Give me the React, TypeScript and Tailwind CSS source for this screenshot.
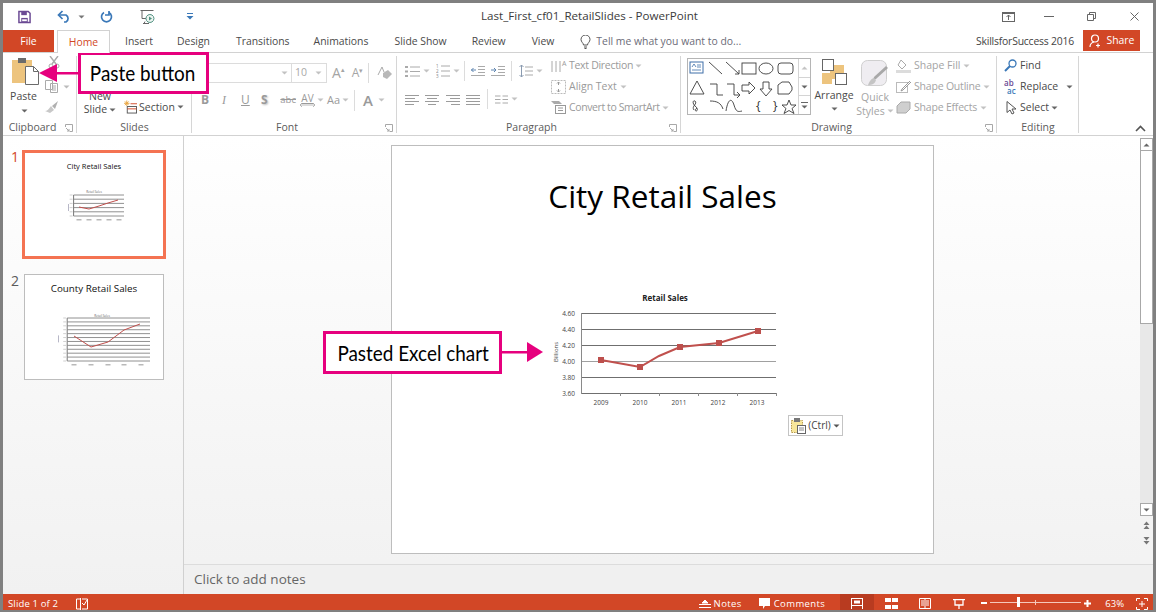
import React from "react";

const FONT = { fontFamily: '"Open Sans", "Noto Sans", sans-serif' };

function Caret({ color = "#8a8a8a", className = "" }: { color?: string; className?: string }) {
  return (
    <svg width="7" height="4" viewBox="0 0 7 4" className={className}>
      <path d="M0.5 0.5h6L3.5 3.5z" fill={color} />
    </svg>
  );
}

function Launcher() {
  return (
    <svg width="8" height="8" viewBox="0 0 8 8" className="absolute right-[4px] bottom-[3px]">
      <path d="M0.5 3V0.5H7.5V7.5H4.5" fill="none" stroke="#a8a8a8" />
      <path d="M1 4l3 3M4 5v2H2" fill="none" stroke="#a8a8a8" />
    </svg>
  );
}

function Group({ w, label, launcher, children }: { w: number; label: string; launcher?: boolean; children?: React.ReactNode }) {
  return (
    <div style={{ width: w }} className="relative h-full shrink-0 flex flex-col">
      <div className="flex-1 min-h-0 flex">{children}</div>
      <div className={`h-[15px] text-center text-[10.5px] leading-[15px] text-[#5c5c5c] ${launcher ? "pr-[15px]" : ""}`}>{label}</div>
      {launcher && <Launcher />}
      <div className="absolute right-0 top-[3px] bottom-[2px] w-px bg-[#d6d6d6]" />
    </div>
  );
}

function VSep({ h = 20, className = "" }: { h?: number; className?: string }) {
  return <div style={{ height: h }} className={`w-px bg-[#dcdcdc] shrink-0 ${className}`} />;
}

function Lines({ kind }: { kind: "left" | "center" | "right" | "justify" }) {
  const rows: [number, number][] =
    kind === "left" ? [[0, 14], [0, 10], [0, 14], [0, 9]] :
    kind === "center" ? [[0, 14], [2, 10], [0, 14], [3, 8]] :
    kind === "right" ? [[0, 14], [4, 10], [0, 14], [5, 9]] :
    [[0, 14], [0, 14], [0, 14], [0, 14]];
  return (
    <svg width="14" height="11" viewBox="0 0 14 11">
      {rows.map(([x, w], i) => (
        <rect key={i} x={x} y={1 + i * 3} width={w} height="1" fill="#9c9c9c" />
      ))}
    </svg>
  );
}

function Gallery() {
  const s = { fill: "none", stroke: "#3c3c3c", strokeWidth: 0.9 };
  return (
    <div className="w-[124px] h-[57px] border border-[#b5b5b5] flex">
      <svg width="110" height="55" viewBox="0 0 110 55" className="shrink-0">
        <rect x="2" y="3" width="13" height="11" fill="#fff" stroke="#3e6ea8" />
        <path d="M4 8l2-3 2 3M9 6h4M9 8h4M4 11h9" stroke="#3e6ea8" fill="none" strokeWidth="0.8" />
        <path d="M21 3l13 12" {...s} />
        <path d="M38 3l13 12M51 11v4h-4" {...s} />
        <rect x="54" y="4" width="14" height="11" {...s} />
        <ellipse cx="78" cy="9.5" rx="7" ry="5.5" {...s} />
        <rect x="90" y="4" width="15" height="11" rx="3" {...s} />
        <path d="M9 22l7 13H2z" {...s} />
        <path d="M22 25h7v11h6" {...s} />
        <path d="M39 25h7v11h5M49 33l3 3-3 3" {...s} />
        <path d="M54 26h7v-3l6 6-6 6v-3h-7z" {...s} />
        <path d="M75 23h6v7h3l-6 7-6-7h3z" {...s} />
        <path d="M90 35V26l4-3h7l3 5v3l-3 4z" {...s} />
        <path d="M6 51c-3-4 4-6 1-9-2-1-3 2 0 5 3 2 3 5 1 5-1 0-1-2 1-3" {...s} />
        <path d="M22 42c7 0 11 2 13 8" {...s} />
        <path d="M38 52c2-13 6-13 8-6s4 7 8 6" {...s} />
        <text x="68" y="51" fontSize="12" fill="#333" style={FONT}>{"{"}</text>
        <text x="85" y="51" fontSize="12" fill="#333" style={FONT}>{"}"}</text>
        <path d="M101 41l2 5h5l-4 3.500 2 5-5-3-5 3 2-5-4-3.500h5z" {...s} />
      </svg>
      <div className="flex-1 border-l border-[#d4d4d4] flex flex-col">
        <div className="h-[19px] flex items-center justify-center border-b border-[#d4d4d4]">
          <svg width="7" height="4" viewBox="0 0 7 4"><path d="M0.500 3.500h6L3.500 0.500z" fill="#c4c4c4" /></svg>
        </div>
        <div className="h-[18px] flex items-center justify-center border-b border-[#d4d4d4]">
          <Caret color="#666" />
        </div>
        <div className="flex-1 flex flex-col items-center justify-center gap-[2px]">
          <div className="w-[7px] h-px bg-[#666]" />
          <Caret color="#666" />
        </div>
      </div>
    </div>
  );
}

function MiniChart({ w, h, pts, lines, xs }: { w: number; h: number; pts: string; lines: number; xs: number[] }) {
  const gap = (h - 8) / (lines - 1);
  const ax = w * 0.1;
  return (
    <svg width={w} height={h} viewBox={`0 0 ${w} ${h}`} className="block">
      <path d={`M${ax} 2V${h - 6}`} stroke="#777" strokeWidth="1" fill="none" />
      {Array.from({ length: lines }).map((_, i) => (
        <g key={i}>
          <line x1={ax} x2={w} y1={2 + i * gap} y2={2 + i * gap} stroke="#858585" strokeWidth="0.9" />
          <rect x={ax - 4} y={1.5 + i * gap} width="3" height="1" fill="#d0d0d0" />
        </g>
      ))}
      <polyline points={pts} fill="none" stroke="#c0504d" strokeWidth="1" />
      {xs.map((x, i) => (
        <rect key={i} x={x - 2.5} y={h - 3} width="5" height="1.500" fill="#b9b9b9" />
      ))}
      <rect x="0" y={h * 0.38} width="1" height="7" fill="#b7b7c7" />
    </svg>
  );
}

export default function App() {
  return (
    <div className="relative w-[1156px] h-[612px] overflow-hidden bg-[#f3f3f3] border-t-[3px] border-x-[3px] border-b-[2px] border-[#808080] flex flex-col text-[#444]" style={FONT}>
      {/* Title bar */}
      <div className="h-[27px] shrink-0 bg-white grid grid-cols-[478px_auto_1fr] items-center">
        <div className="flex items-center">
          <svg width="13" height="14" viewBox="0 0 14 14" className="ml-[15px]">
            <path d="M1 1h10l2 2v10H1z" fill="none" stroke="#6b4a94" strokeWidth="1.600" />
            <rect x="3.500" y="1" width="6" height="4" fill="#6b4a94" />
            <rect x="3.500" y="8" width="7" height="5" fill="#6b4a94" />
            <rect x="4.500" y="9.500" width="5" height="2" fill="#fff" />
          </svg>
          <svg width="14" height="13" viewBox="0 0 14 13" className="ml-[26px]">
            <path d="M2 5h7a4 4 0 0 1 0 7H7" fill="none" stroke="#3a78b8" strokeWidth="1.700" />
            <path d="M5.500 1L1.500 5l4 4" fill="none" stroke="#3a78b8" strokeWidth="1.700" />
          </svg>
          <Caret color="#777" className="ml-[7px]" />
          <svg width="13" height="14" viewBox="0 0 13 14" className="ml-[15px]">
            <path d="M4 2.500a5 5 0 1 0 5 0" fill="none" stroke="#3a78b8" strokeWidth="1.700" />
            <path d="M9 1v4H5" fill="none" stroke="#3a78b8" strokeWidth="1.700" />
          </svg>
          <svg width="16" height="16" viewBox="0 0 16 16" className="ml-[27px]">
            <path d="M0.500 1.500h13M2 1.500v8h4M5 12.500l-1 2M3 14.500h6" fill="none" stroke="#666" />
            <path d="M10 5a4 4 0 1 1-.1 0z" fill="#eef5f1" stroke="#4f9080" transform="translate(0 .5)" />
            <path d="M9 7.500l3 2-3 2z" fill="#4f9080" />
          </svg>
          <svg width="8" height="7" viewBox="0 0 8 7" className="ml-[30px]">
            <rect x="1" y="0" width="6" height="1" fill="#3a78b8" />
            <path d="M0.500 3h7L4 6.500z" fill="#3a78b8" />
          </svg>
        </div>
        <div className="text-[11.6px] leading-[14px] -mt-[2px] text-[#3b3b3b]">Last_First_cf01_RetailSlides - PowerPoint</div>
        <div className="flex items-center justify-end pr-[14px]">
          <svg width="13" height="10" viewBox="0 0 13 10" className="mr-[29px]">
            <rect x="0.500" y="0.500" width="12" height="9" fill="none" stroke="#666" />
            <path d="M6.500 8V3M4.500 5l2-2 2 2M0.500 1.500h12" fill="none" stroke="#666" />
          </svg>
          <div className="w-[10px] h-px bg-[#666] mr-[33px]" />
          <svg width="9" height="9" viewBox="0 0 9 9" className="mr-[34px]">
            <path d="M2.500 2V0.500h6v6H7M0.500 2.500h6v6h-6z" fill="none" stroke="#666" />
          </svg>
          <svg width="9" height="9" viewBox="0 0 9 9">
            <path d="M0.500 0.500l8 8M8.500 0.500l-8 8" stroke="#666" fill="none" />
          </svg>
        </div>
      </div>

      {/* Tabs */}
      <div className="h-[22px] shrink-0 bg-white flex items-stretch text-[10.4px] text-[#4a4a4a] relative">
        <div className="w-[51px] bg-[#d24726] text-white flex items-center justify-center pt-[1px]">File</div>
        <div className="ml-[3px] w-[53px] -mb-px z-10 bg-white border-t border-x border-[#d2d2d2] text-[#d24726] flex items-center justify-center pt-[2px]">Home</div>
        <div className="flex items-center pl-[15px] pt-[2px]">
          <span>Insert</span>
          <span className="ml-[24px]">Design</span>
          <span className="ml-[26px]">Transitions</span>
          <span className="ml-[24px]">Animations</span>
          <span className="ml-[26px]">Slide Show</span>
          <span className="ml-[25px]">Review</span>
          <span className="ml-[26px]">View</span>
          <svg width="11" height="14" viewBox="0 0 11 14" className="ml-[26px] -mt-[1px]">
            <path d="M3.500 10c0-2-2.500-3-2.500-5.500a4.500 4.500 0 0 1 9 0C10 7 7.500 8 7.500 10zM4 12h3M4.500 13.500h2" fill="none" stroke="#555" />
          </svg>
          <span className="ml-[5px] text-[#6c6c78]">Tell me what you want to do...</span>
        </div>
        <div className="ml-auto flex items-center">
          <span className="mr-[9px] pt-[2px] text-[#444] tracking-[-0.2px]">SkillsforSuccess 2016</span>
          <div className="w-[57px] mr-[13px] h-[21px] self-start bg-[#d24726] text-white flex items-center justify-center gap-[4px]">
            <svg width="14" height="14" viewBox="0 0 14 14">
              <circle cx="6" cy="4.500" r="3.500" fill="none" stroke="#fff" strokeWidth="1.200" />
              <path d="M1 13c0-3 2-4.500 4-5M9 9.500v4M7 11.500h4" fill="none" stroke="#fff" strokeWidth="1.200" />
            </svg>
            <span>Share</span>
          </div>
        </div>
      </div>

      {/* Ribbon */}
      <div className="h-[84px] shrink-0 bg-white border-y border-[#d2d2d2] flex text-[#9a9a9a] text-[10.5px] relative">
        <Group w={74} label="Clipboard" launcher>
          <div className="w-[42px] flex flex-col items-center pt-[4px] text-[#4a4a4a]">
            <svg width="28" height="28" viewBox="0 0 28 28" className="ml-[3px]">
              <rect x="0" y="3" width="20" height="23" fill="#edc47e" />
              <rect x="6" y="1" width="8" height="5" fill="#6b6b6b" />
              <path d="M13.500 9.500h8l5 5v13h-13z" fill="#fff" stroke="#6b6b6b" />
              <path d="M21.500 9.500v5h5" fill="none" stroke="#6b6b6b" />
            </svg>
            <span className="mt-[4px] leading-[14px] -ml-[1px]">Paste</span>
            <Caret color="#666" className="mt-[6px]" />
          </div>
          <div className="flex flex-col items-start pt-[3px]">
            <svg width="12" height="14" viewBox="0 0 12 14" className="ml-[3px]"><path d="M2 0l6 8M10 0L4 8" stroke="#aaa" strokeWidth="1.400" /><circle cx="3" cy="10" r="2" fill="none" stroke="#aaa" /><circle cx="9" cy="10" r="2" fill="none" stroke="#aaa" /></svg>
            <div className="flex items-center gap-[5px] mt-[10px]">
              <svg width="13" height="13" viewBox="0 0 13 13"><path d="M0.500 0.500h7v9h-7zM5.500 3.500h7v9h-7z" fill="#fff" stroke="#aaa" /><path d="M7 6h4M7 8h4M7 10h4" stroke="#aaa" /></svg>
              <Caret color="#bbb" />
            </div>
            <svg width="13" height="12" viewBox="0 0 13 12" className="mt-[8px]"><path d="M13 0L7 5 10 8z" fill="#b0b0b0" /><path d="M6 5l3 4-4 3-5-2c2 0 4-2 6-5z" fill="#c8c8c8" /></svg>
          </div>
        </Group>

        <Group w={115} label="Slides">
          <div className="w-[44px] ml-[1px] flex flex-col items-center pt-[37px] text-[#4a4a4a] leading-[13px]">
            <span>New</span>
            <span className="flex items-center gap-[2px]">Slide<Caret color="#666" /></span>
          </div>
          <div className="flex items-start pt-[47px] ml-[2px] text-[#4a4a4a] leading-[14px]">
            <svg width="13" height="14" viewBox="0 0 14 14">
              <path d="M3 0v6M0 3h6M1 1l4 4M5 1L1 5" stroke="#e8a33d" />
              <path d="M7 3.500h7" stroke="#d24726" />
              <rect x="3.500" y="6.500" width="10" height="7" fill="none" stroke="#555" />
              <path d="M3.500 9h10" stroke="#d24726" />
            </svg>
            <span className="ml-[2px] flex items-center gap-[2px]">Section<Caret color="#666" /></span>
          </div>
        </Group>

        <Group w={205} label="Font" launcher>
          <div className="flex-1 flex flex-col pt-[10px] pl-[8px]">
            <div className="flex items-center h-[20px]">
              <div className="w-[127px] h-[20px] border border-[#dcdcdc] flex items-center text-[#aaa]">
                <div className="w-[91px] flex justify-end pr-[3px] h-full items-center border-r border-[#dcdcdc]"><Caret color="#c2c2c2" /></div>
                <span className="ml-[3px] text-[#a8a8a8]">10</span>
                <Caret color="#c2c2c2" className="ml-auto mr-[4px]" />
              </div>
              <div className="ml-[5px] flex items-start text-[14px] leading-none text-[#a5a5a5]"><span>A</span><span className="text-[7px]">▴</span></div>
              <div className="ml-[7px] flex items-start text-[12px] leading-none text-[#a5a5a5]"><span>A</span><span className="text-[7px]">▾</span></div>
              <VSep className="ml-[5px]" />
              <svg width="15" height="15" viewBox="0 0 15 15" className="ml-[8px]"><path d="M1 9l4-8 2 5" fill="none" stroke="#aaa" /><path d="M6 7l5-3 4 4-5 5-4-2z" fill="#b8b8b8" /></svg>
            </div>
            <div className="flex items-center h-[20px] mt-[7px] text-[12px] text-[#9a9a9a]">
              <span className="font-bold ml-[1px] w-[20px] leading-none">B</span>
              <span className="italic w-[20px] pl-[1px]" style={{ fontFamily: '"Liberation Serif", serif' }}>I</span>
              <span className="underline w-[20px]">U</span>
              <span className="font-bold w-[14px]" style={{ textShadow: "1px 1px 2px #bbb" }}>S</span>
              <span className="text-[9.5px] line-through w-[21px] text-right">abc</span>
              <div className="ml-[3px] w-[17px] flex flex-col items-center leading-none">
                <span className="text-[10px] leading-[10px] underline">AV</span>
                <svg width="15" height="4" viewBox="0 0 15 4"><path d="M0 2h15M2 0L0 2l2 2M13 0l2 2-2 2" fill="none" stroke="#a8a8a8" strokeWidth=".8" /></svg>
              </div>
              <Caret color="#c2c2c2" className="ml-[1px]" />
              <span className="ml-[3px] text-[11px]">Aa</span>
              <Caret color="#c2c2c2" className="ml-[2px]" />
              <VSep h={21} className="ml-[5px]" />
              <span className="ml-[8px] text-[15px] font-semibold leading-none">A</span>
              <Caret color="#c2c2c2" className="ml-[5px]" />
            </div>
          </div>
        </Group>

        <Group w={284} label="Paragraph" launcher>
          <div className="w-[154px] shrink-0 flex flex-col pt-[8px] pl-[8px]">
            <div className="flex items-center h-[20px]">
              <svg width="15" height="13" viewBox="0 0 15 13"><path d="M5 2h10M5 6.500h10M5 11h10" stroke="#aaa" /><path d="M0 1h3v2H0zM0 5.500h3v2H0zM0 10h3v2H0z" fill="#aaa" /></svg>
              <Caret color="#c2c2c2" className="ml-[3px]" />
              <svg width="14" height="14" viewBox="0 0 14 14" className="ml-[6px]"><path d="M5 2h9M5 7h9M5 12h9" stroke="#aaa" /><text x="0" y="4" fontSize="4.500" fill="#888">1</text><text x="0" y="9" fontSize="4.500" fill="#888">2</text><text x="0" y="14" fontSize="4.500" fill="#888">3</text></svg>
              <Caret color="#c2c2c2" className="ml-[3px]" />
              <VSep className="ml-[4px]" />
              <svg width="14" height="11" viewBox="0 0 14 11" className="ml-[6px]"><path d="M7 .5h7M7 3.500h7M7 6.500h7M0 9.500h14" stroke="#aaa" /><path d="M0 4h5M2.500 2L.5 4l2 2" fill="none" stroke="#5d84b0" /></svg>
              <svg width="14" height="11" viewBox="0 0 14 11" className="ml-[6px]"><path d="M7 .5h7M7 3.500h7M7 6.500h7M0 9.500h14" stroke="#aaa" /><path d="M0 4h5M3 2l2 2-2 2" fill="none" stroke="#5d84b0" /></svg>
              <VSep className="ml-[6px]" />
              <svg width="14" height="14" viewBox="0 0 14 14" className="ml-[7px]"><path d="M6 3h8M6 7h8M6 11h8" stroke="#aaa" /><path d="M2.500 1v12M.5 3l2-2 2 2M.5 11l2 2 2-2" fill="none" stroke="#8a9bb0" /></svg>
              <Caret color="#c2c2c2" className="ml-[3px]" />
            </div>
            <div className="flex items-center h-[20px] mt-[8px]">
              <Lines kind="left" />
              <span className="w-[6px]" />
              <Lines kind="center" />
              <span className="w-[7px]" />
              <Lines kind="right" />
              <span className="w-[6px]" />
              <Lines kind="justify" />
              <VSep className="ml-[7px]" />
              <svg width="13" height="9" viewBox="0 0 13 9" className="ml-[7px]"><path d="M0 1h5.500M0 4.500h5.500M0 8h5.500M7.500 1H13M7.500 4.500H13M7.500 8H13" stroke="#aaa" /></svg>
              <Caret color="#c2c2c2" className="ml-[3px]" />
            </div>
          </div>
          <div className="flex flex-col leading-[21px] text-[10.5px] pt-[2px] text-[#9a9a9a] whitespace-nowrap">
            <div className="flex items-center h-[21px] gap-[2px]">
              <svg width="16" height="14" viewBox="0 0 16 14"><path d="M1 2v11M5 2v11M9 2v11" stroke="#aaa" /><text x="11" y="7" fontSize="7" fill="#999">A</text></svg>
              <span className="tracking-[-0.3px]">Text Direction</span><Caret color="#c2c2c2" />
            </div>
            <div className="flex items-center h-[21px] gap-[3px]">
              <svg width="15" height="14" viewBox="0 0 15 14"><rect x=".5" y=".5" width="14" height="13" fill="none" stroke="#bbb" strokeDasharray="2 1" /><path d="M7.500 2v3M6 3.500l1.500-1.500 1.500 1.500M7.500 12V9M6 10.500l1.500 1.500 1.500-1.500" fill="none" stroke="#999" /></svg>
              <span>Align Text</span><Caret color="#c2c2c2" />
            </div>
            <div className="flex items-center h-[21px] gap-[3px]">
              <svg width="15" height="13" viewBox="0 0 15 13"><path d="M0 0h8l3 3H3z" fill="#aaa" /><rect x="4.500" y="4.500" width="10" height="8" fill="#fff" stroke="#999" /><path d="M7 7h5M7 9.500h5" stroke="#999" /></svg>
              <span className="tracking-[-0.4px]">Convert to SmartArt</span><Caret color="#c2c2c2" />
            </div>
          </div>
        </Group>

        <Group w={316} label="Drawing" launcher>
          <div className="pt-[5px] pl-[6px]"><Gallery /></div>
          <div className="w-[46px] shrink-0 flex flex-col items-center pt-[6px] text-[#4a4a4a]">
            <svg width="25" height="26" viewBox="0 0 25 26">
              <rect x="8" y="6" width="14" height="14" fill="#edc47e" />
              <rect x="0" y="14" width="10" height="11" fill="#edc47e" />
              <rect x=".5" y=".5" width="11" height="11" fill="#fff" stroke="#666" />
              <rect x="13.500" y="14.500" width="11" height="11" fill="#fff" stroke="#666" />
            </svg>
            <span className="mt-[3px] leading-[14px]">Arrange</span>
            <Caret color="#666" className="mt-[5px]" />
          </div>
          <div className="w-[36px] shrink-0 flex flex-col items-center pt-[7px] text-[#a4a4a4]">
            <svg width="28" height="27" viewBox="0 0 28 27" className="shrink-0">
              <rect x=".5" y=".5" width="25" height="25" rx="6" fill="#efedf1" stroke="#cfcfcf" />
              <path d="M27 8L15 19l-3 1 1-3L25 6z" fill="#a8a8a8" />
              <path d="M13 18c-4 1-5 5-6 7 4 0 7-1 8-5z" fill="#c4c4c4" />
            </svg>
            <span className="mt-[3px] leading-[14px]">Quick</span>
            <span className="flex items-center gap-[2px] leading-[14px]">Styles<Caret color="#c2c2c2" /></span>
          </div>
          <div className="flex flex-col pt-[2px] ml-[3px] text-[#a4a4a4] whitespace-nowrap">
            <div className="flex items-center h-[21px] gap-[3px]">
              <svg width="15" height="14" viewBox="0 0 15 14"><path d="M5 1l5 5-4 4-4-4z" fill="none" stroke="#aaa" /><rect x="0" y="11" width="15" height="3" fill="#dcdcdc" /></svg>
              <span>Shape Fill</span><Caret color="#c2c2c2" />
            </div>
            <div className="flex items-center h-[21px] gap-[3px]">
              <svg width="15" height="14" viewBox="0 0 15 14"><rect x=".5" y="2.500" width="11" height="10" fill="none" stroke="#bbb" /><path d="M14 1L6 9l-1 2 2-1 8-8" fill="#fff" stroke="#999" /></svg>
              <span className="tracking-[-0.2px]">Shape Outline</span><Caret color="#c2c2c2" />
            </div>
            <div className="flex items-center h-[21px] gap-[3px]">
              <svg width="15" height="13" viewBox="0 0 15 13"><path d="M1 5l4-4h9v7l-4 4H1z" fill="#cfcfcf" stroke="#aaa" /></svg>
              <span className="tracking-[-0.2px]">Shape Effects</span><Caret color="#c2c2c2" />
            </div>
          </div>
        </Group>

        <Group w={82} label="Editing">
          <div className="flex flex-col pt-[2px] pl-[7px] text-[#4a4a4a] whitespace-nowrap">
            <div className="flex items-center h-[21px]">
              <svg width="13" height="13" viewBox="0 0 13 13"><circle cx="8.500" cy="4.500" r="3.500" fill="none" stroke="#3a78b8" strokeWidth="1.300" /><path d="M6 7l-5 5" stroke="#3a78b8" strokeWidth="2" /></svg>
              <span className="ml-[3px]">Find</span>
            </div>
            <div className="flex items-center h-[21px]">
              <div className="w-[15px] h-[16px] flex flex-col text-[8px] font-semibold">
                <span className="block h-[8px] leading-[8px] text-[#6b4a94]">ab</span>
                <span className="block h-[8px] leading-[8px] text-[#3a78b8] pl-[3px]">ac</span>
              </div>
              <span className="ml-[1px]">Replace</span>
              <Caret color="#666" className="ml-[8px]" />
            </div>
            <div className="flex items-center h-[21px]">
              <svg width="12" height="14" viewBox="0 0 12 14" className="ml-[2px]"><path d="M1 .5v11l3-2.500 2 4 2-1-2-4h4z" fill="#fff" stroke="#555" /></svg>
              <span className="ml-[2px] flex items-center gap-[2px]">Select<Caret color="#666" /></span>
            </div>
          </div>
        </Group>
        <svg width="11" height="7" viewBox="0 0 11 7" className="absolute right-[7px] bottom-[3px]"><path d="M1 6l4.500-4.500L10 6" fill="none" stroke="#555" strokeWidth="1.600" /></svg>
      </div>

      {/* Main */}
      <div className="flex-1 min-h-0 flex bg-gradient-to-b from-white to-[#f1f1f1]">
        <div className="w-[181px] shrink-0 border-r border-[#d0d0d0] pt-[14px] pl-[8px] text-[#5a5a5a]">
          <div className="flex items-start">
            <span className="w-[10px] text-[14px] leading-[13px] text-[#d24726]">1</span>
            <div className="w-[144px] h-[109px] ml-[1px] border-[3px] border-[#f47352] bg-white flex flex-col items-center">
              <div className="mt-[8px] text-[7.5px] font-medium leading-[10px] text-[#111]">City Retail Sales</div>
              <div className="mt-[19px] text-[3px] leading-[4px] text-[#666]">Retail Sales</div>
              <div className="ml-[3px] -mt-[1px]"><MiniChart w={56} h={29} lines={6} xs={[11, 21, 31, 41, 51]} pts="11,14 21,16 31,13 40,10 50,7" /></div>
            </div>
          </div>
          <div className="flex items-start mt-[15px]">
            <span className="w-[10px] text-[14px] leading-[13px]">2</span>
            <div className="w-[140px] h-[106px] ml-[3px] border border-[#bdbdbd] bg-white flex flex-col items-center">
              <div className="mt-[8px] text-[9.8px] font-medium leading-[12px] text-[#111]">County Retail Sales</div>
              <div className="mt-[19px] ml-[16px] text-[3px] leading-[4px] text-[#666]">Retail Sales</div>
              <div className="ml-[20px] -mt-[2px]"><MiniChart w={92} h={51} lines={12} xs={[16, 33, 50, 66, 83]} pts="16,20 33,31 50,26 66,14 82,8" /></div>
            </div>
          </div>
        </div>

        <div className="flex-1 min-w-0 flex flex-col">
          <div className="flex-1 min-h-0 flex">
            <div className="flex-1 min-w-0 pt-[9px] pl-[207px]">
              <div className="w-[543px] h-[409px] bg-white border border-[#bdbdbd] flex flex-col items-center relative">
                <h1 className="mt-[31px] text-[31.5px] leading-[38px] text-black">City Retail Sales</h1>
                <div className="mt-[73px] mr-[18px]">
                  <svg width="250" height="122" viewBox="0 0 250 122" className="block">
                    <text x="136" y="13" textAnchor="middle" fontSize="8" fontWeight="700" fill="#222" style={FONT}>Retail Sales</text>
                    {[25, 41, 57, 73, 89, 105].map((y, i) => (
                      <g key={y}>
                        <line x1="52" x2="247" y1={y + 0.5} y2={y + 0.5} stroke={i === 3 ? "#a0a0a0" : "#6f6f6f"} />
                        <text x="46" y={y + 3} textAnchor="end" fontSize="6.500" fill="#444" style={FONT}>{["4.60", "4.40", "4.20", "4.00", "3.80", "3.60"][i]}</text>
                      </g>
                    ))}
                    <line x1="52.500" x2="52.500" y1="25" y2="106" stroke="#8a8a8a" />
                    {[91, 130, 169, 208, 247].map((x) => (<line key={x} x1={x + 0.5} x2={x + 0.5} y1="105" y2="108" stroke="#8a8a8a" />))}
                    {["2009", "2010", "2011", "2012", "2013"].map((t, i) => (
                      <text key={t} x={72 + i * 39} y="117" textAnchor="middle" fontSize="6.500" fill="#444" style={FONT}>{t}</text>
                    ))}
                    <text x="0" y="0" transform="translate(29 64) rotate(-90)" textAnchor="middle" fontSize="6" fill="#444" style={FONT}>Billions</text>
                    <polyline points="72,72 111,79 130,68 151,59 190,55 229,43" fill="none" stroke="#c0504d" strokeWidth="2" />
                    {[[72, 72], [111, 79], [151, 59], [190, 55], [229, 43]].map(([x, y]) => (
                      <rect key={x} x={x - 3} y={y - 3} width="6" height="6" fill="#bd4f4c" />
                    ))}
                  </svg>
                </div>
                <div className="mt-[5px] ml-[306px] w-[55px] h-[21px] border border-[#c4c4c4] bg-white flex items-center justify-center gap-[2px] text-[10px] text-[#444]">
                  <svg width="15" height="16" viewBox="0 0 15 16"><rect x=".5" y="2.500" width="11" height="12" fill="#f7e69a" stroke="#b89b4a" strokeDasharray="1.500 1" /><rect x="3" y="0" width="6" height="4" fill="#777" /><rect x="6.500" y="7.500" width="8" height="8" fill="#fff" stroke="#666" /><path d="M8 10h5M8 12h5" stroke="#888" /></svg>
                  <span>(Ctrl)</span>
                  <Caret color="#555" />
                </div>
              </div>
            </div>
            <div className="w-[13px] shrink-0 flex flex-col mt-[2px] bg-[#e8e8e8]">
              <div className="h-[13px] bg-white border border-[#a8a8a8] flex items-center justify-center">
                <svg width="7" height="4" viewBox="0 0 7 4"><path d="M0.500 3.500h6L3.500 0.500z" fill="#666" /></svg>
              </div>
              <div className="h-[173px] bg-white border-x border-b border-[#a8a8a8]" />
              <div className="flex-1" />
              <div className="h-[13px] bg-white border border-[#a8a8a8] flex items-center justify-center"><Caret color="#666" /></div>
              <div className="h-[48px] bg-[#f3f3f3] flex flex-col items-center pt-[5px] gap-[6px]">
                <svg width="7" height="9" viewBox="0 0 7 9"><path d="M0.500 4h6L3.500 0.500zM0.500 8h6L3.500 4.500z" fill="#777" /></svg>
                <svg width="7" height="9" viewBox="0 0 7 9"><path d="M0.500 1h6L3.500 4.500zM0.500 5h6L3.500 8.500z" fill="#777" /></svg>
              </div>
            </div>
          </div>
          <div className="h-[30px] shrink-0 border-t border-[#dcdcdc] bg-[#f0f0f0] pl-[10px] flex items-center text-[13.5px] text-[#666]">Click to add notes</div>
        </div>
      </div>

      {/* Status bar */}
      <div className="h-[16px] shrink-0 bg-[#d24726] text-white text-[9.5px] tracking-[0.4px] flex items-center">
        <span className="ml-[5px] mt-[5px] tracking-[0.15px]">Slide 1 of 2</span>
        <svg width="12" height="12" viewBox="0 0 12 12" className="ml-[18px] mt-[3px]"><path d="M4 1H.5v10H4M6 1h5.500v10H6M4.500 0v12" fill="none" stroke="#fff" /><path d="M6 5l2 2 3-5" fill="none" stroke="#fff" /></svg>
        <div className="ml-auto flex items-center h-full">
          <svg width="12" height="8" viewBox="0 0 12 8" className="mt-[3px]"><path d="M6 0L3 3h6zM0 4.500h12M0 7.500h12" stroke="#fff" fill="#fff" /></svg>
          <span className="ml-[3px] mt-[5px]">Notes</span>
          <svg width="12" height="12" viewBox="0 0 12 12" className="ml-[17px] mt-[3px]"><path d="M0 0h11v8H6l-2 3V8H0z" fill="#fff" /></svg>
          <span className="ml-[3px] mt-[5px]">Comments</span>
          <div className="ml-[15px] w-[34px] h-full bg-[#b83b20] flex items-center justify-center">
            <svg width="12" height="11" viewBox="0 0 12 11" className="mt-[3px]"><path d="M.5 0v11M11.500 0v11M.5.5h11M.5 7.500h11" stroke="#fff" /><rect x="3" y="2.500" width="6" height="3" fill="#fff" /></svg>
          </div>
          <svg width="13" height="11" viewBox="0 0 13 11" className="ml-[11px] mt-[3px]"><path d="M0 0h6v4H0zM7 0h6v4H7zM0 7h6v4H0zM7 7h6v4H7z" fill="#fff" /></svg>
          <svg width="12" height="11" viewBox="0 0 12 11" className="ml-[21px] mt-[3px]"><path d="M.5.5h11v10H.5zM6 .5v10M2 3h3M2 5h3M2 7h3M7 3h3M7 5h3M7 7h3" fill="none" stroke="#fff" /></svg>
          <svg width="12" height="10" viewBox="0 0 12 10" className="ml-[22px] mt-[3px]"><path d="M0 .5h12M2 1v5h8V1M6 6v4" fill="none" stroke="#fff" strokeWidth="1.300" /></svg>
          <div className="ml-[16px] w-[6px] h-[2px] bg-white mt-[2px]" />
          <div className="relative ml-[3px] w-[91px] h-px bg-[#f4c8bb] mt-[1px]">
            <div className="absolute left-[27px] -top-[5px] w-[3px] h-[10px] bg-white" />
            <div className="absolute left-[45px] -top-[2px] w-px h-[5px] bg-[#f4c8bb]" />
          </div>
          <svg width="7" height="7" viewBox="0 0 7 7" className="ml-[3px] mt-[2px]"><path d="M3.500 0v7M0 3.500h7" stroke="#fff" strokeWidth="2" /></svg>
          <span className="ml-[14px] mt-[5px] tracking-normal">63%</span>
          <svg width="12" height="12" viewBox="0 0 12 12" className="ml-[12px] mr-[5px] mt-[3px]"><path d="M.5 3V.5H4M8 .5h3.500V3M11.500 9v2.500H8M4 11.500H.5V9M3 6h6M6 3v6" fill="none" stroke="#fff" /></svg>
        </div>
      </div>

      {/* Callouts */}
      <div className="absolute left-[75px] top-[49px] w-[131px] h-[42px] border-[3px] border-[#e6007e] bg-white flex items-center justify-center text-black" style={{ fontFamily: 'Lato, sans-serif' }}>
        <span className="inline-block whitespace-nowrap text-[21px] scale-x-[0.9] -ml-[1px]">Paste button</span>
      </div>
      <svg width="40" height="18" viewBox="0 0 40 18" className="absolute left-[36px] top-[61px]"><path d="M18 0v18L0 9z" fill="#e6007e" /><rect x="16" y="8" width="24" height="2.500" fill="#e6007e" /></svg>
      <div className="absolute left-[320px] top-[328px] w-[179px] h-[43px] border-[3px] border-[#e6007e] bg-white flex items-center justify-center text-black" style={{ fontFamily: 'Lato, sans-serif' }}>
        <span className="inline-block whitespace-nowrap text-[21px] scale-x-[0.9] ml-[1px]">Pasted Excel chart</span>
      </div>
      <svg width="42" height="20" viewBox="0 0 42 20" className="absolute left-[498px] top-[339px]"><rect x="0" y="9" width="28" height="2.500" fill="#e6007e" /><path d="M26 0v20l16-10z" fill="#e6007e" /></svg>
    </div>
  );
}
